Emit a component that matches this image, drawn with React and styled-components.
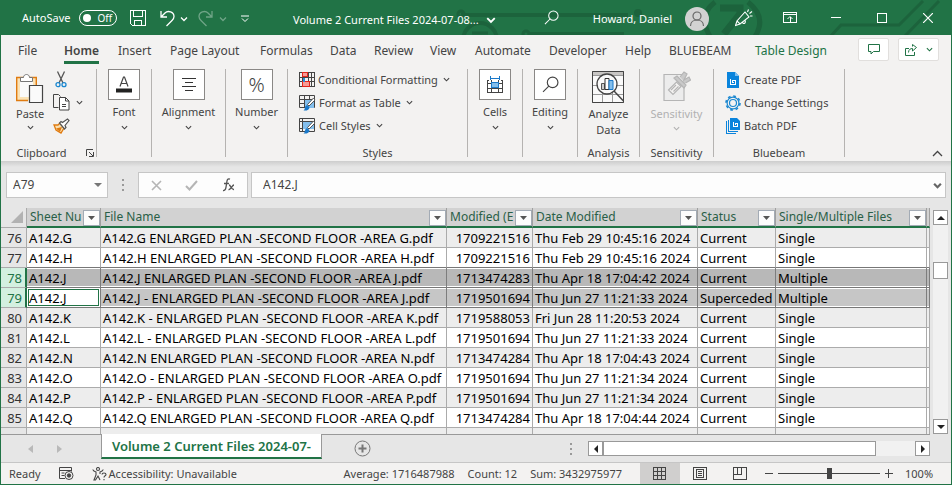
import React from 'react';
import styled, { createGlobalStyle, css } from 'styled-components';

const GREEN = '#217346';
const INK = '#444444';
const LINE = '#ababab';

const Global = createGlobalStyle`
  * { box-sizing: border-box; }
  body { margin: 0; }
  button, input { font: inherit; color: inherit; }
  svg { display: block; flex: none; }
`;

const Window = styled.div`
  height: 100vh;
  display: flex;
  flex-direction: column;
  border: 1px solid ${GREEN};
  border-top: 0;
  background: #e6e6e6;
  color: ${INK};
  font: 11px/16px "Noto Sans", "Open Sans", sans-serif;
  overflow: hidden;
`;

const PlainButton = styled.button.attrs({ type: 'button' })`
  background: none;
  border: 0;
  padding: 0;
  margin: 0;
  display: flex;
  align-items: center;
  white-space: nowrap;
`;

/* ---------- title bar ---------- */
const TitleBar = styled.header`
  position: relative;
  flex: none;
  height: 35px;
  display: flex;
  align-items: center;
  padding-left: 21px;
  background: ${GREEN};
  color: #fff;
`;
const Circuit = styled.svg`
  position: absolute;
  right: 0;
  top: 0;
`;
const AutoSave = styled.label`
  display: flex;
  align-items: center;
  gap: 9px;
  width: 108px;
`;
const Switch = styled.span`
  display: flex;
  align-items: center;
  gap: 6px;
  width: 38px;
  height: 16px;
  padding-left: 3px;
  border: 1px solid #fff;
  border-radius: 8px;
  font-size: 10px;
  input {
    appearance: none;
    margin: 0;
    width: 8px;
    height: 8px;
    border-radius: 50%;
    background: #fff;
  }
`;
const QuickTools = styled.div`
  display: flex;
  align-items: center;
  width: 163px;
`;
const QuickTool = styled(PlainButton)`
  width: ${(p) => p.$w}px;
  padding-top: 2px;
  opacity: ${(p) => (p.$off ? 0.35 : 1)};
`;
const DocName = styled(PlainButton)`
  position: relative;
  gap: 7px;
  padding-top: 4px;
`;
const TitleRight = styled.div`
  position: relative;
  margin-left: auto;
  display: flex;
  align-items: center;
  height: 100%;
`;
const SearchButton = styled(PlainButton)`
  width: 49px;
`;
const User = styled(PlainButton)`
  gap: 13px;
  padding: 2px 12px 0 0;
`;
const WinButton = styled(PlainButton)`
  justify-content: center;
  width: 46px;
  height: 100%;
`;

/* ---------- ribbon ---------- */
const Tabs = styled.nav`
  flex: none;
  display: flex;
  align-items: center;
  height: 29px;
  padding: 0 12px 0 17px;
  background: #f3f2f1;
  font-size: 12px;
`;
const Tab = styled(PlainButton)`
  flex: none;
  width: ${(p) => p.$w}px;
  height: 29px;
  ${(p) => p.$green && css`color: ${GREEN};`}
  span {
    height: 28px;
    padding-top: 7px;
    ${(p) =>
      p.$active &&
      css`
        font-weight: 600;
        border-bottom: 3px solid ${GREEN};
      `}
  }
`;
const TabActions = styled.div`
  display: flex;
  gap: 9px;
  margin-left: auto;
`;
const ActionButton = styled(PlainButton)`
  justify-content: center;
  gap: 9px;
  width: ${(p) => p.$w}px;
  height: 23px;
  border: 1px solid #e1dfdd;
  border-radius: 2px;
  background: #fff;
`;
const Ribbon = styled.section`
  flex: none;
  display: flex;
  height: 97px;
  padding-top: 5px;
  background: #f3f2f1;
`;
const Group = styled.div`
  display: flex;
  flex-direction: column;
  flex: none;
  width: ${(p) => p.$w}px;
  height: 88px;
  border-right: 1px solid #b5b3b1;
`;
const GroupBody = styled.div`
  flex: 1;
  min-height: 0;
  display: flex;
  justify-content: ${(p) => (p.$left ? 'flex-start' : 'center')};
  align-items: flex-start;
  padding-left: ${(p) => p.$left || 0}px;
`;
const GroupFoot = styled.div`
  position: relative;
  height: 10px;
  line-height: 12px;
  text-align: center;
  padding-right: ${(p) => (p.$launch ? 14 : 0)}px;
  button {
    position: absolute;
    right: 2px;
    top: 2px;
  }
`;
const BigButton = styled(PlainButton)`
  flex-direction: column;
  ${(p) => p.$off && css`color: #b1b1b1;`}
  padding-top: ${(p) => p.$top || 0}px;
  gap: ${(p) => p.$gap}px;
`;
const IconBox = styled.span`
  display: grid;
  place-items: center;
  width: 32px;
  height: 31px;
  background: #fff;
  border: 1px solid #8a8886;
`;
const Stack = styled.div`
  display: flex;
  flex-direction: column;
  padding-left: ${(p) => p.$left || 0}px;
`;
const RowButton = styled(PlainButton)`
  height: 23px;
  padding: 0 0 2px ${(p) => p.$pad || 0}px;
  gap: ${(p) => p.$gap || 3}px;
  svg:last-child:not(:first-child) { margin-left: 2px; }
`;
const Percent = styled.span`
  font-size: 20px;
  font-weight: 300;
`;
const Collapse = styled(PlainButton)`
  margin: auto 8px 4px auto;
`;

/* ---------- formula bar ---------- */
const FormulaBar = styled.div`
  flex: none;
  display: flex;
  align-items: flex-start;
  height: 47px;
  padding: 11px 5px 0;
  background: linear-gradient(#cdcdcd, #e6e6e6 6px);
  font-size: 12px;
`;
const Field = styled.div`
  display: flex;
  align-items: center;
  height: 26px;
  background: #fdfdfd;
  border: 1px solid #c6c6c6;
  padding-right: ${(p) => p.$end}px;
  ${(p) => (p.$w ? css`flex: none; width: ${p.$w}px;` : css`flex: 1; min-width: 0;`)}
  input {
    flex: 1;
    min-width: 0;
    border: 0;
    outline: 0;
    background: none;
    padding: 0 0 0 ${(p) => p.$pad}px;
  }
`;
const Dots = styled.svg`
  margin: ${(p) => p.$m};
`;
const FxBox = styled.div`
  display: flex;
  align-items: center;
  justify-content: space-around;
  width: 110px;
  height: 26px;
  margin-right: 3px;
  background: #fdfdfd;
  border: 1px solid #c6c6c6;
`;

/* ---------- worksheet ---------- */
const SheetArea = styled.main`
  flex: 1;
  min-height: 0;
  display: flex;
`;
const GridWrap = styled.div`
  flex: 1;
  min-width: 0;
  overflow: hidden;
`;
const Grid = styled.table`
  width: 100%;
  table-layout: fixed;
  border-collapse: separate;
  border-spacing: 0;
  color: #000;
  font-size: 13px;
  line-height: 18px;
`;
const Col = styled.col`
  ${(p) => p.$w && css`width: ${p.$w}px;`}
`;
const ColHead = styled.th`
  height: 20px;
  padding: 0;
  text-align: left;
  font-size: 12px;
  font-weight: 400;
  color: #2a5f47;
  background: #d2d2d2;
  border-right: 1px solid #a0a0a0;
  border-bottom: 2px solid ${GREEN};
`;
const HeadInner = styled.div`
  display: flex;
  align-items: center;
  height: 18px;
  padding-left: 3px;
  span {
    flex: 1;
    min-width: 0;
    white-space: nowrap;
  }
`;
const FilterButton = styled(PlainButton)`
  flex: none;
  justify-content: center;
  width: 17px;
  height: 16px;
  margin-top: 2px;
  background: #fcfcfc;
  border: 1px solid #a3abb5;
`;
const Corner = styled.th`
  padding: 0 3px 2px 0;
  background: #e6e6e6;
  border-right: 1px solid ${LINE};
  border-bottom: 1px solid ${LINE};
  svg { margin-left: auto; }
`;
const RowHead = styled.th`
  height: 20px;
  padding: 1px 4px 0 0;
  text-align: right;
  font-weight: 400;
  color: #333;
  background: #e6e6e6;
  border-right: 1px solid ${LINE};
  border-bottom: 1px solid ${LINE};
  ${(p) =>
    p.$selected &&
    css`
      color: ${GREEN};
      background: #d3f0e0;
      border-right: 2px solid ${GREEN};
      padding-right: 3px;
    `}
`;
const Cell = styled.td`
  height: 20px;
  padding: 1px 2px 0;
  white-space: nowrap;
  overflow: hidden;
  text-align: ${(p) => (p.$right ? 'right' : 'left')};
  background: ${(p) => p.$fill};
  border-right: 1px solid ${LINE};
  border-bottom: 1px solid ${(p) => (p.$edge ? '#777777' : LINE)};
  ${(p) =>
    p.$selected &&
    css`
      border-right-color: #7d7d7d;
      box-shadow: inset 0 1px #fff, inset 0 -1px #fff;
    `}
  ${(p) =>
    p.$active &&
    css`
      box-shadow: inset 0 0 0 1px #fff, inset 0 0 0 2px ${GREEN};
    `}
`;
const VScroll = styled.div`
  flex: none;
  display: flex;
  flex-direction: column;
  width: 15px;
  margin: 2px 3px 0 3px;
  background: #f1f1f1;
`;
const ScrollButton = styled(PlainButton)`
  flex: none;
  justify-content: center;
  width: 15px;
  height: 15px;
  background: #fff;
  border: 1px solid #999;
`;
const VThumb = styled.div`
  height: 17px;
  margin: 37px 0 auto;
  background: #fff;
  border: 1px solid #999;
`;

/* ---------- sheet tabs ---------- */
const SheetBar = styled.div`
  flex: none;
  display: flex;
  align-items: flex-start;
  height: 28px;
  padding-right: 21px;
`;
const SheetNav = styled.div`
  display: flex;
  align-items: center;
  gap: 24px;
  width: 100px;
  height: 28px;
  padding-left: 27px;
  border-top: 1px solid #999;
`;
const SheetTab = styled(PlainButton)`
  justify-content: center;
  width: 221px;
  height: 25px;
  background: #fff;
  border: solid #999;
  border-width: 0 1px;
  border-bottom: 2px solid ${GREEN};
  color: ${GREEN};
  font-size: 13px;
  font-weight: 600;
`;
const SheetRest = styled.div`
  flex: 1;
  display: flex;
  align-items: center;
  height: 28px;
  padding-left: 32px;
  border-top: 1px solid #999;
`;
const HScroll = styled.div`
  display: flex;
  width: 342px;
  height: 15px;
  background: #f1f1f1;
`;
const HThumb = styled.div`
  width: 273px;
  margin-right: auto;
  background: #fff;
  border: 1px solid #999;
`;

/* ---------- status bar ---------- */
const StatusBar = styled.footer`
  flex: none;
  display: flex;
  align-items: center;
  height: 22px;
  padding-left: 8px;
  background: #f3f2f1;
  border-top: 1px solid #c6c6c6;
`;
const StatusLeft = styled.div`
  flex: 1;
  display: flex;
  align-items: center;
  gap: 18px;
`;
const Access = styled.span`
  display: flex;
  align-items: center;
  gap: 2px;
`;
const Stats = styled.div`
  display: flex;
  gap: 13px;
  margin-right: 18px;
`;
const ViewButton = styled(PlainButton)`
  justify-content: center;
  width: 40px;
  height: 21px;
  background: ${(p) => (p.$on ? '#d0cfce' : 'none')};
`;
const Zoom = styled.div`
  display: flex;
  align-items: center;
  gap: 5px;
  padding-left: 5px;
  width: 191px;
  input {
    appearance: none;
    width: 102px;
    height: 11px;
    margin: 0;
    background: linear-gradient(${INK}, ${INK}) center / 100% 1px no-repeat;
  }
  input::-webkit-slider-thumb {
    appearance: none;
    width: 5px;
    height: 11px;
    background: ${INK};
  }
  > span { margin-left: 7px; }
`;

/* ---------- icons ---------- */
const Chevron = ({ w = 7, color = INK, sw = 1.3 }) => (
  <svg width={w} height={w} viewBox="0 0 8 8" fill="none" stroke={color} strokeWidth={sw}>
    <path d="M1 2.5 4 5.5 7 2.5" />
  </svg>
);
const Tri = ({ d, w = 8, h = 8, color = '#222' }) => (
  <svg width={w} height={h} viewBox={`0 0 ${w} ${h}`} fill={color}><path d={d} /></svg>
);
const Mag = ({ s = 16, color = INK }) => (
  <svg width={s} height={s} viewBox="0 0 16 16" fill="none" stroke={color} strokeWidth="1.1">
    <circle cx="10" cy="6" r="5" /><path d="M6.4 9.6 1 15" />
  </svg>
);
const CircuitArt = () => (
  <Circuit width="500" height="35" viewBox="451 0 500 35" fill="none" stroke="#1c633c" strokeWidth="4">
    <path d="M461 15H628" /><circle cx="461" cy="14" r="3" strokeWidth="3" />
    <circle cx="480" cy="40" r="17" /><path d="M472 33h16" strokeWidth="3" />
    <circle cx="526" cy="34" r="3" strokeWidth="3" /><path d="M530 34h94" />
    <circle cx="638" cy="13" r="2" />
    <path d="M715 2q-18 14-4 36M748 2q20 16 6 36" strokeWidth="5" />
    <path d="M720 8h20v6l-16 20" strokeWidth="7" />
    <path d="M829 38l12-13h58l24-24M905 36l34-35" strokeWidth="3" />
  </Circuit>
);
const SaveIcon = () => (
  <svg width="16" height="17" viewBox="0 0 16 17" fill="none" stroke="#fff" shapeRendering="crispEdges">
    <path d="M.5.5h15v15H2.500l-2-2zM3.500.5v6h9v-6M4.500 15.500v-5h7v5" />
  </svg>
);
const UndoIcon = ({ flip }) => (
  <svg width="15" height="17" viewBox="0 0 15 17" fill="none" stroke="#fff" strokeWidth="1.300">
    <path
      d={
        flip
          ? 'M14 1v6H8M13.500 6.500 10 3C7 0 1 2 1 6.500c0 2 1 3 2 4L8.500 16'
          : 'M1 1v6h6M1.500 6.500 5 3c3-3 9-1 9 3.500 0 2-1 3-2 4L6.500 16'
      }
    />
  </svg>
);
const UserIcon = () => (
  <svg width="24" height="24" viewBox="0 0 24 24" fill="none" stroke="#666" strokeWidth="1.200">
    <circle cx="12" cy="12" r="12" fill="#d2d2d2" stroke="none" />
    <circle cx="12" cy="9" r="4" /><path d="M5.500 19c0-8 13-8 13 0" />
  </svg>
);
const PenIcon = () => (
  <svg width="18" height="18" viewBox="0 0 18 18" fill="none" stroke="#fff" strokeWidth="1.100">
    <path d="M10 3 14 8 5 15 2 12zM2 12l-1.500 4.500L5 15M7 13c2 3 4 1 3-2M12.500 3l1-2.500M14.500 4.500l2.500-2M15 7h2.500" />
  </svg>
);
const RibbonModeIcon = () => (
  <svg width="14" height="11" viewBox="0 0 14 11" fill="none" stroke="#fff" shapeRendering="crispEdges">
    <path d="M.5.5h13v10H.5zM.5 2.500h13M7 10V5" /><path d="M4.500 7 7 4.500 9.500 7" shapeRendering="auto" />
  </svg>
);
const PasteIcon = () => (
  <svg width="28" height="31" viewBox="0 0 28 31" fill="none">
    <path d="M1 4.500h19v23H1z" fill="#fbe3b6" /><path d="M4 8h13v16H4z" fill="#fafafa" />
    <path d="M12 27.500H.7V4.500h19.600V12" stroke="#e07b10" strokeWidth="1.400" />
    <path d="M4.500 8.500v-4h3c0-4 6-4 6 0h3v4z" fill="#fff" stroke="#767676" />
    <path d="M13.500 12.500h13v17h-13z" fill="#fafafa" stroke="#444" strokeWidth="1.200" />
  </svg>
);
const CutIcon = () => (
  <svg width="12" height="17" viewBox="0 0 12 17" fill="none" stroke="#555" strokeWidth="1.300">
    <path d="M2.500.5 8 12M9.500.5 4 12" />
    <g stroke="#1a87d0"><circle cx="3" cy="13.700" r="2" /><circle cx="9" cy="13.700" r="2" /></g>
  </svg>
);
const CopyIcon = () => (
  <svg width="17" height="17" viewBox="0 0 17 17" fill="none" stroke="#444">
    <path d="M5.500 13.500h-5V.5h5l2 2" /><path d="M6.500 3.500h6l3.500 3.500v9H6.500z" fill="#fff" />
    <path d="M12.500 3.500v3.500H16M9 10.500h4M9 12.500h4" />
  </svg>
);
const BrushIcon = () => (
  <svg width="17" height="16" viewBox="0 0 17 16" fill="none">
    <path d="M1 7h4l2-2 4 5-3 5-5-3z" fill="#fbe0b0" stroke="#e07b10" strokeWidth="1.300" /><path d="M3 10.500 9 9l-2 5z" fill="#e07b10" />
    <path d="m6.500 5 5 6 1.500-1.500L12 7.500l4-5L14.500 1l-5 3.500-1.500-1z" fill="#fff" stroke="#555" strokeWidth="1.200" />
  </svg>
);
const LaunchIcon = () => (
  <svg width="8" height="8" viewBox="0 0 8 8" fill="none" stroke={INK}>
    <path d="M.5 7V.5H7M3 3l4 4M7.500 3v4.500H3" />
  </svg>
);
const FontIcon = () => (
  <svg width="16" height="18" viewBox="0 0 16 18" fill="none" stroke={INK} strokeWidth="1.200">
    <path d="M4 10.500 7.500 1h1L12 10.500M5.200 7.500h5.600" /><path d="M0 12.500h16v4H0z" fill="#222" stroke="none" />
  </svg>
);
const AlignIcon = () => (
  <svg width="14" height="16" viewBox="0 0 14 16" stroke="#333" shapeRendering="crispEdges">
    <path d="M0 1.500h14M3 5.500h8M0 9.500h14M3 13.500h8" />
  </svg>
);
const CondIcon = () => (
  <svg width="16" height="15" viewBox="0 0 16 15" fill="none" stroke="#444" shapeRendering="crispEdges">
    <path d="M.5.5h15v14H.5zM3.500.5v14M9.500.5v14M12.500.5v14M.5 5h15M.5 9.500h15" />
    <path d="M3.500.5h5v4h-5zM3.500 9.500h7v4.500h-7z" fill="#f79b94" stroke="#e0241b" /><path d="M4 5.500h2v4H4z" fill="#2f8ad8" stroke="none" />
  </svg>
);
const StyleIcon = ({ table }) => (
  <svg width="17" height="16" viewBox="0 0 17 16" fill="none" stroke="#444">
    <path d={table ? 'M.5.5h15v12H.5zM5.500.5v12M10.500.5v12M.5 4.500h15M.5 8.500h15' : 'M.5.5h15v13H.5zM3.500.5v13M.5 3.500h15M.5 10.500h4'} />
    <path d={table ? 'M6 5h9v8H6z' : 'M4 4h11v7H4z'} fill="#83beec" stroke="none" />
    <path d="m14.500 3-6 6.500 1.500 1.500L16 5z" fill="#fff" stroke="#555" />
    <path d="M4.500 15.500c2-1 .5-4 3.500-5.500l2.500 2c0 3-3 4-6 3.500z" fill="#1a78c8" stroke="none" />
  </svg>
);
const CellsIcon = () => (
  <svg width="16" height="17" viewBox="0 0 16 17" fill="none" stroke="#444" shapeRendering="crispEdges">
    <path d="M2 4.500H.5v12h15v-12H14M4.500 4v12M11.500 4v12M.5 7.500h15M.5 12.500h15" />
    <path d="M4.500 6.500h7v5h-7z" fill="#83beec" stroke="#1a78c8" /><path d="M3.500 0v4M12.500 0v4M4 2.500h8" stroke="#1a78c8" />
  </svg>
);
const AnalyzeIcon = () => (
  <svg width="32" height="32" viewBox="0 0 32 32" fill="none" stroke="#666">
    <path d="M.5.5h31v31H.5z" fill="#fafafa" /><path d="M1 1h30v3H1z" fill="#c8c6c4" stroke="none" />
    <path d="M.5 4.500h31M.5 14.500h31M.5 23.500h31M10.500 5v26M20.500 5v26" stroke="#999" />
    <path d="M.5.5h31v31H.5z" stroke="#444" />
    <circle cx="15" cy="13" r="10" fill="#fafafa" stroke="#444" strokeWidth="1.300" />
    <path d="M9.500 12.500h3v6h-3z" fill="#ccc" stroke="#555" /><path d="M13 7.500h4v11h-4z" fill="#fff" stroke="#333" /><path d="M17 9.500h4v9h-4z" fill="#83beec" stroke="#1a78c8" />
    <path d="m22 20 9.500 10" stroke="#444" strokeWidth="1.500" />
  </svg>
);
const SensIcon = () => (
  <svg width="28" height="32" viewBox="0 0 28 32" fill="none" stroke="#b5b5b5" strokeWidth="1.200">
    <path d="M1 3.500h20v26H1z" fill="#ececec" />
    <path d="m5.500 19 8-8 4.500 4.500-8 8z" fill="#f3f2f1" /><path d="m8 19 5-5M10.500 20.500l5-5" />
    <path d="m11 7 3-2 9 9-2 3zM17 6l4-5 3 2-3 6 5-3 1.500 3-5 3" fill="#c9c9c9" />
  </svg>
);
const PdfIcon = () => (
  <svg width="16" height="16" viewBox="0 0 16 16" fill="#0a84dc">
    <path d="M2 0h8l4 4v12H2z" /><path d="M10 0v4h4z" fill="#7fc0f0" />
    <path d="M5.500 7v5.500h5v-4h-3v2h1" fill="none" stroke="#fff" shapeRendering="crispEdges" />
  </svg>
);
const GearIcon = () => (
  <svg width="16" height="16" viewBox="0 0 16 16" fill="none" stroke="#1a87d0">
    <circle cx="8" cy="8" r="7" strokeWidth="1.600" strokeDasharray="2.750 2.750" /><circle cx="8" cy="8" r="5.900" strokeWidth="1.200" />
    <circle cx="8" cy="8" r="3.500" strokeWidth="1.200" />
  </svg>
);
const BatchIcon = () => (
  <svg width="16" height="16" viewBox="0 0 16 16" fill="none" stroke="#0a84dc">
    <path d="M1.500 3v12.500H11M3.500 1.500v12H13" shapeRendering="crispEdges" /><path d="M5 0h7l3 3v9H5z" fill="#0a84dc" stroke="none" />
    <path d="M8.500 4v4.500h4v-3h-2v1" stroke="#fff" shapeRendering="crispEdges" />
  </svg>
);
const CommentIcon = () => (
  <svg width="12" height="11" viewBox="0 0 12 11" fill="none" stroke={GREEN}><path d="M.5.5h11v7h-6L3 10V7.500H.5z" /></svg>
);
const ShareIcon = () => (
  <svg width="12" height="12" viewBox="0 0 12 12" fill="none" stroke={GREEN}>
    <path d="M4 4.500H.5v7h9V8M3.500 8.500c0-3 2-4 4-4V7L11.500 3.500 7.500.5v2" />
  </svg>
);
const ViewIcon = ({ d }) => (
  <svg width="14" height="13" viewBox="0 0 14 13" fill="none" stroke={INK} shapeRendering="crispEdges"><path d={d} /></svg>
);
const MacroIcon = () => (
  <svg width="15" height="13" viewBox="0 0 15 13" fill="none" stroke={INK}>
    <path d="M6 11.500H.5V.5h12v4M.5 3.500h12M2.500 6h3M2.500 8.500h3" /><circle cx="10" cy="8.500" r="4" /><circle cx="10" cy="8.500" r="1.700" fill={INK} />
  </svg>
);
const AccessIcon = () => (
  <svg width="15" height="14" viewBox="0 0 15 14" fill="none" stroke={INK} strokeWidth="1.100">
    <circle cx="6" cy="2" r="1.500" /><path d="M.8 2.500C1 4 4 5 4 5v3l-2 5h1.500L6 9l2 4M11.200 2.500C11 4 8 5 8 5v2M10 7.500c0-2 4-2 4 0 0 1.500-2 1-2 3M12 12v1.300" />
  </svg>
);
const ThreeDots = ({ m }) => (
  <Dots $m={m} width="3" height="12" viewBox="0 0 3 12" fill="#999"><path d="M0 0h2v2H0zM0 5h2v2H0zM0 10h2v2H0z" /></Dots>
);
const PlusMinus = ({ plus }) => (
  <svg width="8" height="9" viewBox="0 0 8 9" stroke={INK} shapeRendering="crispEdges"><path d={plus ? 'M0 4.500h8M3.500 0v9' : 'M0 4.500h8'} /></svg>
);

/* ---------- data ---------- */
const tabs = [
  ['File', 46], ['Home', 54], ['Insert', 52], ['Page Layout', 90], ['Formulas', 70], ['Data', 44], ['Review', 56],
  ['View', 45], ['Automate', 74], ['Developer', 76], ['Help', 44], ['BLUEBEAM', 86], ['Table Design', 80],
];
const columns = ['Sheet Nu', 'File Name', 'Modified (E', 'Date Modified', 'Status', 'Single/Multiple Files'];
const rows = [
  [76, 'A142.G', 'A142.G ENLARGED PLAN -SECOND FLOOR -AREA G.pdf', '1709221516', 'Thu Feb 29 10:45:16 2024', 'Current', 'Single'],
  [77, 'A142.H', 'A142.H ENLARGED PLAN -SECOND FLOOR -AREA H.pdf', '1709221516', 'Thu Feb 29 10:45:16 2024', 'Current', 'Single'],
  [78, 'A142.J', 'A142.J ENLARGED PLAN -SECOND FLOOR -AREA J.pdf', '1713474283', 'Thu Apr 18 17:04:42 2024', 'Current', 'Multiple'],
  [79, 'A142.J', 'A142.J - ENLARGED PLAN -SECOND FLOOR -AREA J.pdf', '1719501694', 'Thu Jun 27 11:21:33 2024', 'Superceded', 'Multiple'],
  [80, 'A142.K', 'A142.K - ENLARGED PLAN -SECOND FLOOR -AREA K.pdf', '1719588053', 'Fri Jun 28 11:20:53 2024', 'Current', 'Single'],
  [81, 'A142.L', 'A142.L - ENLARGED PLAN -SECOND FLOOR -AREA L.pdf', '1719501694', 'Thu Jun 27 11:21:33 2024', 'Current', 'Single'],
  [82, 'A142.N', 'A142.N ENLARGED PLAN -SECOND FLOOR -AREA N.pdf', '1713474284', 'Thu Apr 18 17:04:43 2024', 'Current', 'Single'],
  [83, 'A142.O', 'A142.O - ENLARGED PLAN -SECOND FLOOR -AREA O.pdf', '1719501694', 'Thu Jun 27 11:21:34 2024', 'Current', 'Single'],
  [84, 'A142.P', 'A142.P - ENLARGED PLAN -SECOND FLOOR -AREA P.pdf', '1719501694', 'Thu Jun 27 11:21:34 2024', 'Current', 'Single'],
  [85, 'A142.Q', 'A142.Q ENLARGED PLAN -SECOND FLOOR -AREA Q.pdf', '1713474284', 'Thu Apr 18 17:04:44 2024', 'Current', 'Single'],
  ['', '', '', '', '', '', ''],
];
const fillFor = (n, i, col) => {
  if (n === 79 && col === 0) return '#ffffff';
  if (n === 78) return '#b8b8b8';
  if (n === 79) return '#c6c6c6';
  return i % 2 ? '#ffffff' : '#ededed';
};

const BoxGroup = ({ w, label, children }) => (
  <Group $w={w}>
    <GroupBody>
      <BigButton $gap={4}>
        <IconBox>{children}</IconBox>
        <span>{label}</span>
        <Chevron />
      </BigButton>
    </GroupBody>
  </Group>
);

export default function App() {
  return (
    <Window>
      <Global />
      <TitleBar>
        <CircuitArt />
        <AutoSave>
          AutoSave
          <Switch><input type="checkbox" aria-label="AutoSave" />Off</Switch>
        </AutoSave>
        <QuickTools>
          <QuickTool $w={30} aria-label="Save"><SaveIcon /></QuickTool>
          <QuickTool $w={20} aria-label="Undo"><UndoIcon /></QuickTool>
          <QuickTool $w={18} aria-label="Undo list"><Chevron w={8} color="#fff" /></QuickTool>
          <QuickTool $w={21} $off aria-label="Redo"><UndoIcon flip /></QuickTool>
          <QuickTool $w={22} $off aria-label="Redo list"><Chevron w={8} color="#fff" /></QuickTool>
          <QuickTool $w={10} aria-label="Customize toolbar">
            <svg width="8" height="8" viewBox="0 0 8 8" fill="none" stroke="#fff"><path d="M0 1h8M1 3.500l3 3 3-3" /></svg>
          </QuickTool>
        </QuickTools>
        <DocName>Volume 2 Current Files 2024-07-08...<Chevron w={10} color="#fff" sw={1.5} /></DocName>
        <TitleRight>
          <SearchButton aria-label="Search"><Mag s={15} color="#fff" /></SearchButton>
          <User>Howard, Daniel<UserIcon /></User>
          <WinButton aria-label="Draw"><PenIcon /></WinButton>
          <WinButton aria-label="Ribbon display options"><RibbonModeIcon /></WinButton>
          <WinButton aria-label="Minimize">
            <svg width="10" height="10" viewBox="0 0 10 10" stroke="#fff" shapeRendering="crispEdges"><path d="M0 4.500h10" /></svg>
          </WinButton>
          <WinButton aria-label="Maximize">
            <svg width="10" height="10" viewBox="0 0 10 10" fill="none" stroke="#fff" shapeRendering="crispEdges"><path d="M.5.5h9v9h-9z" /></svg>
          </WinButton>
          <WinButton aria-label="Close">
            <svg width="10" height="10" viewBox="0 0 10 10" stroke="#fff" strokeWidth="1.200"><path d="m0 0 10 10M10 0 0 10" /></svg>
          </WinButton>
        </TitleRight>
      </TitleBar>

      <Tabs>
        {tabs.map(([t, w]) => (
          <Tab key={t} $w={w} $active={t === 'Home'} $green={t === 'Table Design'}><span>{t}</span></Tab>
        ))}
        <TabActions>
          <ActionButton $w={31} aria-label="Comments"><CommentIcon /></ActionButton>
          <ActionButton $w={41} aria-label="Share"><ShareIcon /><Chevron color={GREEN} /></ActionButton>
        </TabActions>
      </Tabs>

      <Ribbon>
        <Group $w={96}>
          <GroupBody $left={15}>
            <BigButton $gap={2} $top={4}><PasteIcon /><span>Paste</span><Chevron /></BigButton>
            <Stack $left={9}>
              <RowButton $pad={2} aria-label="Cut"><CutIcon /></RowButton>
              <RowButton $gap={4} aria-label="Copy"><CopyIcon /><Chevron /></RowButton>
              <RowButton aria-label="Format painter"><BrushIcon /></RowButton>
            </Stack>
          </GroupBody>
          <GroupFoot $launch>Clipboard<PlainButton aria-label="Clipboard options"><LaunchIcon /></PlainButton></GroupFoot>
        </Group>
        <BoxGroup w={55} label="Font"><FontIcon /></BoxGroup>
        <BoxGroup w={74} label="Alignment"><AlignIcon /></BoxGroup>
        <BoxGroup w={62} label="Number"><Percent>%</Percent></BoxGroup>
        <Group $w={180}>
          <GroupBody $left={11}>
            <Stack>
              <RowButton><CondIcon /><span>Conditional Formatting</span><Chevron /></RowButton>
              <RowButton><StyleIcon table /><span>Format as Table</span><Chevron /></RowButton>
              <RowButton><StyleIcon /><span>Cell Styles</span><Chevron /></RowButton>
            </Stack>
          </GroupBody>
          <GroupFoot>Styles</GroupFoot>
        </Group>
        <BoxGroup w={55} label="Cells"><CellsIcon /></BoxGroup>
        <BoxGroup w={55} label="Editing"><Mag s={17} /></BoxGroup>
        <Group $w={62}>
          <GroupBody>
            <BigButton $gap={3} $top={2}><AnalyzeIcon /><span>Analyze<br />Data</span></BigButton>
          </GroupBody>
          <GroupFoot>Analysis</GroupFoot>
        </Group>
        <Group $w={74}>
          <GroupBody>
            <BigButton $gap={3} $top={2} $off disabled><SensIcon /><span>Sensitivity</span><Chevron color="#b1b1b1" /></BigButton>
          </GroupBody>
          <GroupFoot>Sensitivity</GroupFoot>
        </Group>
        <Group $w={131}>
          <GroupBody $left={11}>
            <Stack>
              <RowButton><PdfIcon /><span>Create PDF</span></RowButton>
              <RowButton><GearIcon /><span>Change Settings</span></RowButton>
              <RowButton><BatchIcon /><span>Batch PDF</span></RowButton>
            </Stack>
          </GroupBody>
          <GroupFoot>Bluebeam</GroupFoot>
        </Group>
        <Collapse aria-label="Collapse ribbon">
          <svg width="11" height="7" viewBox="0 0 11 7" fill="none" stroke={INK} strokeWidth="1.300"><path d="M1 6l4.500-4.500L10 6" /></svg>
        </Collapse>
      </Ribbon>

      <FormulaBar>
        <Field $w={102} $pad={6} $end={5}>
          <input aria-label="Name box" defaultValue="A79" />
          <Tri w={8} h={4} d="M0 0h8L4 4z" color="#777" />
        </Field>
        <ThreeDots m="7px 13px 0 14px" />
        <FxBox>
          <PlainButton aria-label="Cancel">
            <svg width="11" height="11" viewBox="0 0 11 11" stroke="#b5b5b5" strokeWidth="1.600"><path d="m1 1 9 9M10 1l-9 9" /></svg>
          </PlainButton>
          <PlainButton aria-label="Enter">
            <svg width="13" height="11" viewBox="0 0 13 11" fill="none" stroke="#b5b5b5" strokeWidth="2"><path d="m1 6 3.500 3.500L12 1" /></svg>
          </PlainButton>
          <PlainButton aria-label="Insert function">
            <svg width="13" height="14" viewBox="0 0 13 14" fill="none" stroke="#555" strokeWidth="1.300">
              <path d="M8 1.200C5 0 5 3 4.500 6S4 13 1 12.500M2 5.500h5M7 7c2 0 2 5 5 4.500M12 7c-2 0-3 5-5.500 4.500" />
            </svg>
          </PlainButton>
        </FxBox>
        <Field $pad={11} $end={3}>
          <input aria-label="Formula" defaultValue="A142.J" />
          <Chevron w={9} color="#666" sw={2} />
        </Field>
      </FormulaBar>

      <SheetArea>
        <GridWrap>
          <Grid>
            <colgroup>
              <Col $w={26} /><Col $w={74} /><Col /><Col $w={86} /><Col $w={165} /><Col $w={78} /><Col $w={151} /><Col $w={3} />
            </colgroup>
            <thead>
              <tr>
                <Corner aria-label="Select all"><Tri w={12} h={12} d="M12 0v12H0z" color="#b2b2b2" /></Corner>
                {columns.map((c) => (
                  <ColHead key={c}>
                    <HeadInner>
                      <span>{c}</span>
                      <FilterButton aria-label={`Filter ${c}`}><Tri w={7} h={4} d="M0 0h7L3.500 4z" color="#555" /></FilterButton>
                    </HeadInner>
                  </ColHead>
                ))}
                <ColHead aria-hidden="true" />
              </tr>
            </thead>
            <tbody>
              {rows.map(([n, ...cells], i) => {
                const selected = n === 78 || n === 79;
                const edge = selected || n === 77;
                return (
                  <tr key={i}>
                    <RowHead $selected={selected}>{n}</RowHead>
                    {cells.map((c, j) => (
                      <Cell
                        key={j}
                        $right={j === 2}
                        $fill={fillFor(n, i, j)}
                        $edge={edge}
                        $selected={selected}
                        $active={n === 79 && j === 0}
                      >
                        {c}
                      </Cell>
                    ))}
                    <Cell $fill={fillFor(n, i, 6)} $edge={edge} $selected={selected} />
                  </tr>
                );
              })}
            </tbody>
          </Grid>
        </GridWrap>
        <VScroll>
          <ScrollButton aria-label="Scroll up"><Tri w={8} h={4} d="M0 4h8L4 0z" /></ScrollButton>
          <VThumb />
          <ScrollButton aria-label="Scroll down"><Tri w={8} h={4} d="M0 0h8L4 4z" /></ScrollButton>
        </VScroll>
      </SheetArea>

      <SheetBar>
        <SheetNav>
          <PlainButton aria-label="Previous sheet"><Tri w={5} h={8} d="M5 0v8L0 4z" color="#b9b9b9" /></PlainButton>
          <PlainButton aria-label="Next sheet"><Tri w={5} h={8} d="M0 0v8l5-4z" color="#b9b9b9" /></PlainButton>
        </SheetNav>
        <SheetTab>Volume 2 Current Files 2024-07-</SheetTab>
        <SheetRest>
          <PlainButton aria-label="New sheet">
            <svg width="17" height="17" viewBox="0 0 17 17" fill="none" stroke="#777">
              <circle cx="8.500" cy="8.500" r="7.500" /><path d="M8.500 4.500v8M4.500 8.500h8" strokeWidth="2" />
            </svg>
          </PlainButton>
          <ThreeDots m="0 15px 0 auto" />
          <HScroll>
            <ScrollButton aria-label="Scroll left"><Tri w={4} h={8} d="M4 0v8L0 4z" /></ScrollButton>
            <HThumb />
            <ScrollButton aria-label="Scroll right"><Tri w={4} h={8} d="M0 0v8l4-4z" /></ScrollButton>
          </HScroll>
        </SheetRest>
      </SheetBar>

      <StatusBar>
        <StatusLeft>
          <span>Ready</span>
          <MacroIcon />
          <Access><AccessIcon />Accessibility: Unavailable</Access>
        </StatusLeft>
        <Stats>
          <span>Average: 1716487988</span>
          <span>Count: 12</span>
          <span>Sum: 3432975977</span>
        </Stats>
        <ViewButton $on aria-label="Normal view"><ViewIcon d="M.5.5h12v12H.5zM4.500.5v12M8.500.5v12M.5 4.500h12M.5 8.500h12" /></ViewButton>
        <ViewButton aria-label="Page layout view"><ViewIcon d="M.5.5h13v12H.5zM3.500 2.500h7v8h-7zM5 4.500h4M5 6.500h4M5 8.500h4" /></ViewButton>
        <ViewButton aria-label="Page break view"><ViewIcon d="M.5.5h13v12H.5zM.5 7.500h8V.5M4.500.5v7" /></ViewButton>
        <Zoom>
          <PlainButton aria-label="Zoom out"><PlusMinus /></PlainButton>
          <input type="range" aria-label="Zoom" min="0" max="100" defaultValue="50" />
          <PlainButton aria-label="Zoom in"><PlusMinus plus /></PlainButton>
          <span>100%</span>
        </Zoom>
      </StatusBar>
    </Window>
  );
}
